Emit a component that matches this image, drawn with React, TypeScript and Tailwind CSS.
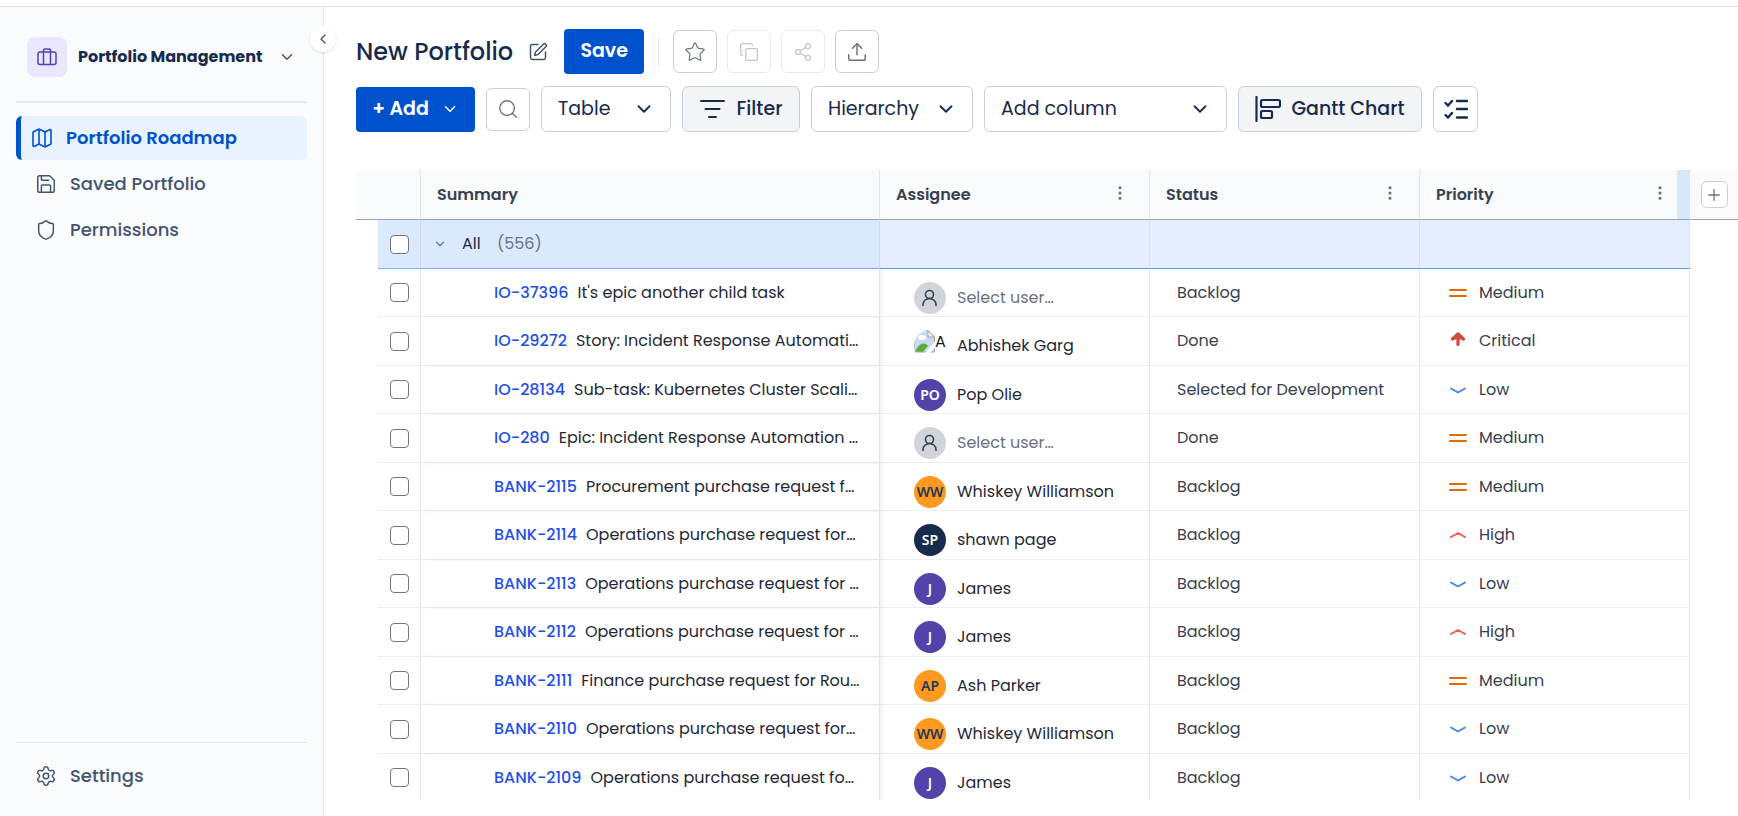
import { useState } from "react";
import type { ReactNode } from "react";
import { ChevronDown, ChevronLeft, Copy, Map, MoreVertical, Plus, Save, Search, Settings, Share2, Shield, SquarePen, Star, Upload } from "lucide-react";

type Priority = "Medium" | "Critical" | "Low" | "High";

interface Issue {
  key: string;
  title: string;
  assignee?: string;
  initials?: string;
  color?: string;
  status: string;
  priority: Priority;
}

const PURPLE = "bg-[#5243aa] text-white";
const ORANGE = "bg-[#ff991f] text-[#253858]";
const NAVY = "bg-[#172b4d] text-white";

const issues: Issue[] = [
  { key: "IO-37396", title: "It's epic another child task", status: "Backlog", priority: "Medium" },
  { key: "IO-29272", title: "Story: Incident Response Automati…", assignee: "Abhishek Garg", status: "Done", priority: "Critical" },
  { key: "IO-28134", title: "Sub-task: Kubernetes Cluster Scali…", assignee: "Pop Olie", initials: "PO", color: PURPLE, status: "Selected for Development", priority: "Low" },
  { key: "IO-280", title: "Epic: Incident Response Automation …", status: "Done", priority: "Medium" },
  { key: "BANK-2115", title: "Procurement purchase request f…", assignee: "Whiskey Williamson", initials: "WW", color: ORANGE, status: "Backlog", priority: "Medium" },
  { key: "BANK-2114", title: "Operations purchase request for…", assignee: "shawn page", initials: "SP", color: NAVY, status: "Backlog", priority: "High" },
  { key: "BANK-2113", title: "Operations purchase request for …", assignee: "James", initials: "J", color: PURPLE, status: "Backlog", priority: "Low" },
  { key: "BANK-2112", title: "Operations purchase request for …", assignee: "James", initials: "J", color: PURPLE, status: "Backlog", priority: "High" },
  { key: "BANK-2111", title: "Finance purchase request for Rou…", assignee: "Ash Parker", initials: "AP", color: ORANGE, status: "Backlog", priority: "Medium" },
  { key: "BANK-2110", title: "Operations purchase request for…", assignee: "Whiskey Williamson", initials: "WW", color: ORANGE, status: "Backlog", priority: "Low" },
  { key: "BANK-2109", title: "Operations purchase request fo…", assignee: "James", initials: "J", color: PURPLE, status: "Backlog", priority: "Low" },
];

function PriorityIcon({ priority }: { priority: Priority }) {
  return (
    <svg width="18" height="18" viewBox="0 0 18 18" fill="none" strokeWidth="2" strokeLinecap="round" strokeLinejoin="round" aria-hidden="true">
      {priority === "Medium" && <path d="M1 6h16M1 12h16" stroke="#e06c00" />}
      {priority === "Low" && <path d="M2 7.5l7 4 7-4" stroke="#4688ec" />}
      {priority === "High" && <path d="M2 11l7-4 7 4" stroke="#f15b50" />}
      {priority === "Critical" && <path d="M9 2L3.500 7M9 2l5.500 5M9 3L6 6M9 3l3 3M9 2v10.500" stroke="#d04a3e" strokeWidth="3.200" />}
    </svg>
  );
}

function Avatar({ issue }: { issue: Issue }) {
  if (!issue.assignee) {
    return (
      <span className="flex size-8 shrink-0 items-center justify-center rounded-full bg-[#d1d5db]">
        <svg width="18" height="18" viewBox="0 0 18 18" fill="none" stroke="#374151" strokeWidth="1.6" strokeLinecap="round">
          <circle cx="8.500" cy="5.500" r="4" />
          <path d="M2 16.500v-1a6.500 6 0 0 1 13 0v1" />
        </svg>
      </span>
    );
  }
  // picture that failed to load, with its alt text beside it
  if (!issue.initials) {
    return (
      <span className="flex size-8 shrink-0 items-start overflow-hidden rounded-full">
        <svg width="21" height="23" viewBox="0 0 21 23" className="shrink-0">
          <path d="M0 .5h14l6.500 6.500v15H0z" fill="#c9d9f6" />
          <ellipse cx="8" cy="7.500" rx="4" ry="2.500" fill="#fff" />
          <path d="M1 22c2-5 5-8.500 8.500-8.500 2 0 3.500 1 4.500 2.500L9 22z" fill="#5aae38" />
          <path d="M0 .5h14l6.500 6.500v15H0z" fill="none" stroke="#a3a3a3" />
          <path d="M14 .5V7h6.500z" fill="#f5f5f5" stroke="#a3a3a3" />
          <path d="M21 11.500L11 23h5l5-5.500z" fill="#fff" />
        </svg>
        <span className="text-base text-gray-900">A</span>
      </span>
    );
  }
  return (
    <span className={`flex size-8 shrink-0 items-center justify-center rounded-full font-['Noto_Sans',sans-serif] text-sm font-semibold ${issue.color}`}>
      {issue.initials}
    </span>
  );
}

function IconButton({ label, muted, children }: { label: string; muted?: boolean; children: ReactNode }) {
  return (
    <button
      type="button"
      aria-label={label}
      disabled={muted}
      className="flex h-[43px] w-11 items-center justify-center rounded-md border border-[#c9cfda] bg-white text-[#6b7280] disabled:border-[#e8eaee] disabled:text-[#c0c5ce]"
    >
      {children}
    </button>
  );
}

function Dropdown({ label, width }: { label: string; width: string }) {
  return (
    <div className={`relative ${width}`}>
      <select aria-label={label} className="h-[46px] w-full appearance-none rounded-md border border-[#c9cfda] bg-white pl-4 text-[19px] text-[#172b4d] focus:outline-none">
        <option>{label}</option>
      </select>
      <ChevronDown size={22} className="pointer-events-none absolute top-3 right-4 text-[#172b4d]" />
    </div>
  );
}

function NavItem({ icon, label }: { icon: ReactNode; label: string }) {
  return (
    <a href="#" className="flex h-[46px] items-center gap-[13px] pl-[19px] text-lg font-medium text-[#44546f]">
      {icon}
      {label}
    </a>
  );
}

function Sidebar() {
  return (
    <aside className="relative flex w-[324px] shrink-0 flex-col border-r border-[#e5e7eb] bg-[#fafbfd] px-4">
      <button type="button" className="flex h-[94px] items-center pt-1.5 pl-[11px] text-left">
        <span className="flex size-10 items-center justify-center rounded-lg bg-[#eae6ff] text-[#5243aa]">
          <svg width="20" height="20" viewBox="0 0 20 20" fill="none" stroke="currentColor" strokeWidth="1.500" strokeLinejoin="round">
            <rect x="1" y="5" width="18" height="12.500" rx="2" />
            <path d="M6.500 17.500V3.500a1.500 1.500 0 0 1 1.500-1.500h4a1.500 1.500 0 0 1 1.500 1.500v14" />
          </svg>
        </span>
        <span className="w-[211px] pl-[11px] text-base font-bold whitespace-nowrap text-[#172b4d]">Portfolio Management</span>
        <ChevronDown size={18} className="text-[#44546f]" />
      </button>

      <nav className="flex flex-1 flex-col border-t-2 border-[#e6e8eb] pt-[13px]">
        <a href="#" className="mb-px flex h-11 items-center gap-3 rounded-md border-l-[5px] border-[#0052cc] bg-[#e9f2ff] pl-[9px] text-lg font-semibold text-[#0052cc]">
          <Map size={24} strokeWidth={1.6} />
          Portfolio Roadmap
        </a>
        <NavItem icon={<Save size={22} strokeWidth={1.6} />} label="Saved Portfolio" />
        <NavItem icon={<Shield size={22} strokeWidth={1.6} />} label="Permissions" />
      </nav>

      <div className="border-t border-[#e6e8eb] pt-2.5 pb-[17px]">
        <NavItem icon={<Settings size={22} strokeWidth={1.6} />} label="Settings" />
      </div>

      <button type="button" aria-label="Collapse sidebar" className="absolute top-[19px] -right-[13px] flex size-[26px] items-center justify-center rounded-full bg-white text-[#44546f] shadow">
        <ChevronLeft size={16} />
      </button>
    </aside>
  );
}

function Header() {
  return (
    <header className="flex flex-col gap-3 px-8 pt-[22px]">
      <div className="flex items-center">
        <h1 className="text-2xl font-medium text-[#172b4d]">New Portfolio</h1>
        <button type="button" aria-label="Rename portfolio" className="ml-[15px] text-[#44546f]">
          <SquarePen size={20} strokeWidth={1.8} />
        </button>
        <button type="button" className="ml-4 h-[45px] w-20 rounded bg-[#0052cc] text-[19px] font-semibold text-white">Save</button>
        <div className="mx-[14px] h-7 w-px bg-[#e5e7eb]" />
        <div className="flex gap-2.5">
          <IconButton label="Add to favourites"><Star size={22} strokeWidth={1.3} /></IconButton>
          <IconButton label="Duplicate" muted><Copy size={20} strokeWidth={1.5} /></IconButton>
          <IconButton label="Share" muted><Share2 size={20} strokeWidth={1.5} /></IconButton>
          <IconButton label="Export"><Upload size={22} strokeWidth={1.6} /></IconButton>
        </div>
      </div>

      <div className="flex items-center gap-[11px]">
        <button type="button" className="flex h-[45px] w-[119px] items-center justify-center gap-3 rounded bg-[#0052cc] text-[19px] font-semibold text-white">
          + Add
          <ChevronDown size={18} />
        </button>
        <IconButton label="Search"><Search size={22} strokeWidth={1.5} /></IconButton>
        <Dropdown label="Table" width="w-[130px]" />
        <button type="button" className="flex h-[46px] w-[118px] items-center justify-center gap-3 rounded-md border border-[#c9cfda] bg-[#f3f4f6] text-[19px] font-medium text-[#172b4d]">
          <svg width="25" height="20" viewBox="0 0 25 20" fill="none" stroke="currentColor" strokeWidth="2" strokeLinecap="round" className="shrink-0">
            <path d="M1 2h23M5.500 10h14M9 18h7" />
          </svg>
          Filter
        </button>
        <Dropdown label="Hierarchy" width="w-[162px]" />
        <Dropdown label="Add column" width="w-[243px]" />
        <button type="button" className="flex h-[46px] w-[184px] items-center justify-center gap-2.5 rounded-md border border-[#c9cfda] bg-[#f3f4f6] text-[19px] font-medium whitespace-nowrap text-[#172b4d]">
          <svg width="26" height="26" viewBox="0 0 26 26" fill="none" stroke="currentColor" strokeWidth="2.200" strokeLinecap="round" className="shrink-0">
            <path d="M1.500 1v24" />
            <rect x="6" y="4" width="19" height="7" rx="1.500" />
            <rect x="6" y="15" width="11" height="7" rx="1.500" />
          </svg>
          Gantt Chart
        </button>
        <button type="button" aria-label="Bulk select" className="flex h-[46px] w-[45px] items-center justify-center rounded-md border border-[#c9cfda] bg-white text-[#172b4d]">
          <svg width="24" height="22" viewBox="0 0 24 22" fill="none" stroke="currentColor" strokeWidth="2.400" strokeLinecap="round">
            <path d="M1.500 5l2.500 2.500L8 3M1.500 17l2.500 2.500L8 15M13 3h10M13 11h10M13 19.500h10" />
          </svg>
        </button>
      </div>
    </header>
  );
}

const thClass = "border-r border-b border-r-[#e2e4e9] border-b-[#9ca3af] bg-[#f9fafb] p-0 text-left text-base font-semibold text-[#374151]";
const lineClass = "border-r border-b border-r-[#e2e4e9] border-b-[#eceef1] p-0";
const groupClass = "border-r border-b border-r-[#d9dfe9] border-b-[#5c99f3] bg-[#e5eefd] p-0";
const stickyShadow = "shadow-[2px_0_4px_rgba(0,0,0,0.06)]";

function ColumnHead({ label, last }: { label: string; last?: boolean }) {
  return (
    <th scope="col" className={thClass}>
      <div className="flex h-[49px] items-center">
        <span className="flex-1 pl-4">{label}</span>
        <button type="button" aria-label={`${label} options`} className={`pb-1 text-[#6b7280] ${last ? "mr-2" : "mr-5"}`}>
          <MoreVertical size={18} strokeWidth={2.2} />
        </button>
        {last && <span className="h-full w-3 bg-[#d8e8fb]" />}
      </div>
    </th>
  );
}

function RowCheckbox({ label, checked, onChange }: { label: string; checked: boolean; onChange: () => void }) {
  return (
    <input
      type="checkbox"
      aria-label={label}
      checked={checked}
      onChange={onChange}
      className="mx-auto block size-[19px] appearance-none rounded border border-[#767676] bg-white checked:bg-[#0052cc]"
    />
  );
}

function PortfolioTable() {
  const [selected, setSelected] = useState<string[]>([]);

  const toggle = (key: string) => setSelected(selected.includes(key) ? selected.filter((k) => k !== key) : [...selected, key]);
  const toggleAll = () => setSelected(selected.length === issues.length ? [] : issues.map((i) => i.key));

  return (
    <table className="w-full min-w-[1200px] table-fixed border-separate border-spacing-0">
      <colgroup>
        <col className="w-[22px]" />
        <col className="w-[43px]" />
        <col />
        <col className="w-[270px]" />
        <col className="w-[270px]" />
        <col className="w-[270px]" />
        <col className="w-12" />
      </colgroup>
      <thead>
        <tr className="h-[50px]">
          <th colSpan={2} className={`${thClass} rounded-tl-lg`} />
          <th scope="col" className={`${thClass} ${stickyShadow}`}>
            <span className="pl-4">Summary</span>
          </th>
          <ColumnHead label="Assignee" />
          <ColumnHead label="Status" />
          <ColumnHead label="Priority" last />
          <th className="border-b border-[#9ca3af] bg-[#f9fafb] p-0">
            <button type="button" aria-label="Add column" className="mx-auto flex size-[27px] items-center justify-center rounded-md border border-[#c9cfda] bg-white text-[#6b7280]">
              <Plus size={18} strokeWidth={1.8} />
            </button>
          </th>
        </tr>
      </thead>
      <tbody>
        <tr className="h-[49px]">
          <td />
          <td className="border-r border-b border-r-[#d5dbe6] border-b-[#7fb0f8] bg-[#dbe9fe] p-0">
            <RowCheckbox label="Select all" checked={selected.length === issues.length} onChange={toggleAll} />
          </td>
          <td className={`border-r border-b border-r-[#d5dbe6] border-b-[#7fb0f8] bg-[#dbe9fe] p-0 ${stickyShadow}`}>
            <div className="flex items-center pl-3">
              <button type="button" aria-label="Collapse group" className="text-[#6b7280]">
                <ChevronDown size={14} />
              </button>
              <span className="w-9 pl-[15px] text-base text-[#1f2937]">All</span>
              <span className="pl-[14px] text-base text-[#6b7280]">(556)</span>
            </div>
          </td>
          <td className={groupClass} />
          <td className={groupClass} />
          <td className={groupClass} />
          <td />
        </tr>
        {issues.map((issue) => (
          <tr key={issue.key} className="odd:h-[49px] even:h-12">
            <td />
            <td className={lineClass}>
              <RowCheckbox label={`Select ${issue.key}`} checked={selected.includes(issue.key)} onChange={() => toggle(issue.key)} />
            </td>
            <td className={`${lineClass} ${stickyShadow}`}>
              <div className="flex gap-[9px] overflow-hidden pr-4 pl-[73px] text-base whitespace-nowrap">
                <a href="#" className="font-medium text-[#1f50e6]">{issue.key}</a>
                <span className="text-[#1f2937]">{issue.title}</span>
              </div>
            </td>
            <td className={lineClass}>
              <div className="flex items-center gap-[11px] pt-2.5 pl-[34px]">
                <Avatar issue={issue} />
                <span className={`text-base whitespace-nowrap ${issue.assignee ? "text-[#1f2937]" : "text-[#6b7280]"}`}>{issue.assignee ?? "Select user…"}</span>
              </div>
            </td>
            <td className={`${lineClass} text-base whitespace-nowrap text-[#374151]`}>
              <span className="pl-[27px]">{issue.status}</span>
            </td>
            <td className={lineClass}>
              <div className="flex items-center gap-3 pl-[29px] text-base text-[#374151]">
                <PriorityIcon priority={issue.priority} />
                {issue.priority}
              </div>
            </td>
            <td />
          </tr>
        ))}
      </tbody>
    </table>
  );
}

export default function App() {
  return (
    <div className="flex h-screen flex-col bg-white pt-1.5 font-['Poppins','Inter',sans-serif]">
      <div className="flex min-h-0 flex-1 border-t border-[#dfe1e6]">
        <Sidebar />
        <main className="flex min-w-0 flex-1 flex-col pb-4">
          <Header />
          <div className="mt-[38px] min-h-0 flex-1 overflow-hidden pl-8">
            <PortfolioTable />
          </div>
        </main>
      </div>
    </div>
  );
}
